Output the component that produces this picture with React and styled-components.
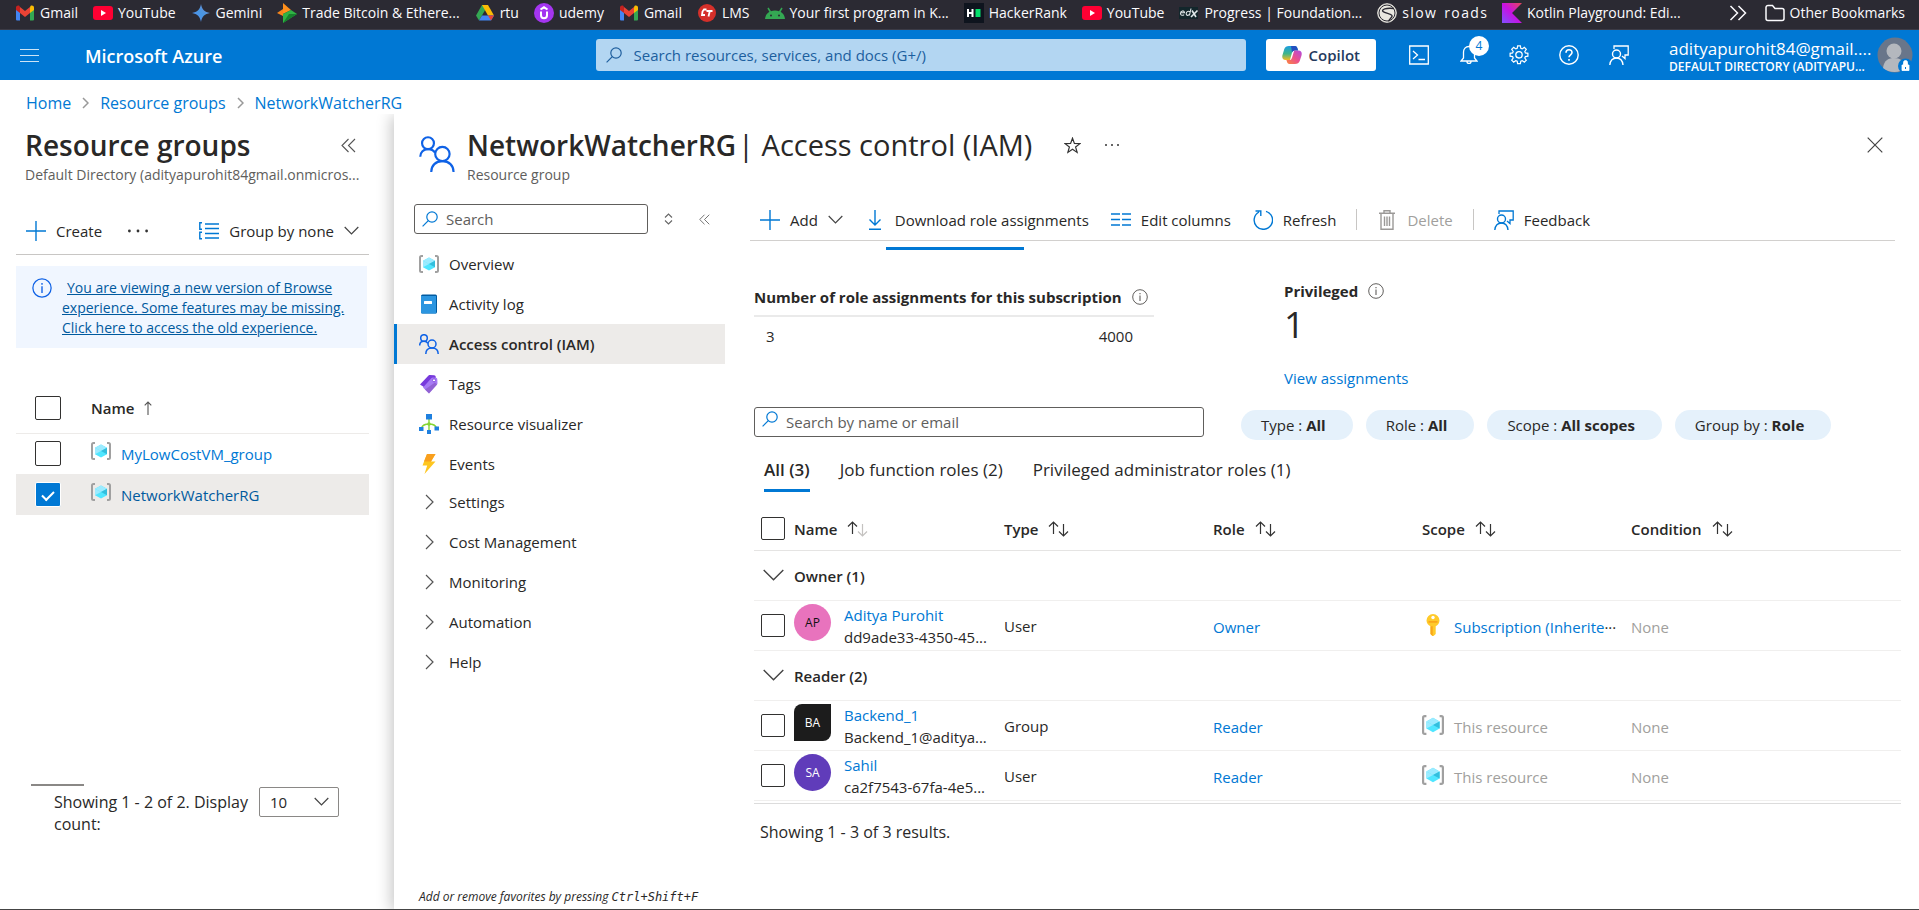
import React from "react";
import styled, { createGlobalStyle, css } from "styled-components";

const c = {
  blue: "#0078d4",
  darkBlue: "#005a9e",
  text: "#292827",
  muted: "#605e5c",
  faint: "#a19f9d",
  selected: "#edebe9",
};

const Global = createGlobalStyle`
  * { box-sizing: border-box; }
  body {
    margin: 0;
    background: #fff;
    color: ${c.text};
    font-family: "Open Sans", "Noto Sans", sans-serif;
    font-size: 15px;
    line-height: 20px;
  }
  button, input, select { font: inherit; color: inherit; }
  button { background: none; border: 0; padding: 0; cursor: pointer; }
  a { color: ${c.blue}; text-decoration: none; }
  svg { display: block; flex: none; }
  h1, h2, p, ul { margin: 0; padding: 0; font-weight: normal; }
  ul { list-style: none; }
`;

/* ---------- icons ---------- */

const Svg = ({ w = 20, h = 20, box, children, ...rest }) => (
  <svg width={w} height={h} viewBox={box || `0 0 ${w} ${h}`} fill="none" aria-hidden="true" {...rest}>
    {children}
  </svg>
);

const GmailIcon = () => (
  <Svg w={20} h={18} box="0 0 20 18">
    <path d="M1 3v12.5a1 1 0 0 0 1 1h3V7z" fill="#4285f4" />
    <path d="M19 3v12.5a1 1 0 0 1-1 1h-3V7z" fill="#34a853" />
    <path d="M15 3.2V9l4-3V3.6c0-2-2.200-2.600-3.500-1.600z" fill="#fbbc04" />
    <path d="M5 3.200V9L1 6V3.600c0-2 2.200-2.600 3.500-1.600z" fill="#c5221f" />
    <path d="M5 3l5 3.900L15 3v6l-5 3.900L5 9z" fill="#ea4335" />
  </Svg>
);
const YouTubeIcon = () => (
  <Svg>
    <rect y="3" width="20" height="14" rx="3" fill="#f03" />
    <path d="M8 7l5 3-5 3z" fill="#fff" />
  </Svg>
);
const GeminiIcon = () => (
  <Svg>
    <defs>
      <linearGradient id="gem" x1="0" y1="1" x2="1" y2="0">
        <stop offset="0" stopColor="#5b8def" />
        <stop offset=".5" stopColor="#4796e3" />
        <stop offset="1" stopColor="#7b8ccc" />
      </linearGradient>
    </defs>
    <path d="M10 1c.8 5.200 3.800 8.200 9 9-5.200.8-8.200 3.800-9 9-.8-5.200-3.800-8.200-9-9 5.200-.8 8.200-3.800 9-9z" fill="url(#gem)" />
  </Svg>
);
const TradeIcon = () => (
  <Svg>
    <path d="M6 0l8 7-8 4z" fill="#ff8f1c" />
    <path d="M0 10l6-4v7z" fill="#f7841b" />
    <path d="M6 11l8-4 6 4-14 9z" fill="#2fb344" />
    <path d="M6 20l14-9-8 0z" fill="#16802c" />
  </Svg>
);
const DriveIcon = () => (
  <Svg>
    <path d="M7 2h6l-3 5.300L4 17.500 1 12.500z" fill="#34a853" />
    <path d="M7 2h6l6 10.500h-6z" fill="#fbbc04" />
    <path d="M4 17.500l3-5h12l-3 5z" fill="#4285f4" />
    <path d="M13 12.500h6l-3 5z" fill="#ea4335" />
  </Svg>
);
const UdemyIcon = () => (
  <Svg>
    <circle cx="10" cy="10" r="10" fill="#a435f0" />
    <path d="M6.500 6.500L10 4.300l3.500 2.200M7 8.500v3.700a3 3 0 0 0 6 0V8.500" stroke="#fff" strokeWidth="2" />
  </Svg>
);
const LmsIcon = () => (
  <Svg>
    <circle cx="10" cy="10" r="9" fill="#d5302a" />
    <path d="M9.500 6.500H7L5.500 8.500 5 12h3M9.500 8h6M12.800 8l-1.300 5.500" stroke="#fff" strokeWidth="1.800" />
  </Svg>
);
const AndroidIcon = () => (
  <Svg>
    <path d="M0 16C.5 11 4 7.500 10 7.500S19.500 11 20 16z" fill="#34a853" />
    <path d="M5.500 9L3 5M14.500 9L17 5" stroke="#34a853" strokeWidth="1.500" />
    <circle cx="6" cy="12.500" r="1" fill="#2b2a33" />
    <circle cx="14" cy="12.500" r="1" fill="#2b2a33" />
  </Svg>
);
const HackerIcon = () => (
  <Svg>
    <rect width="20" height="20" fill="#0e141e" />
    <path d="M4 6v8M8.500 6v8M4 10h4.500" stroke="#fff" strokeWidth="2" />
    <rect x="11.500" y="6" width="5" height="8" fill="#05e06c" />
  </Svg>
);
const EdxIcon = () => (
  <Svg>
    <rect y="4" width="19" height="12" fill="#12262b" />
    <path d="M1.500 9.800h4c0-2.600-3.800-2.600-4 .6 0 2.200 2.400 2.300 3.600 1.200M12 5.500l-1.600 7M11.200 8.800c-2.400-1.300-4 .2-4 2 0 1.900 2.200 2.100 3.500.4" stroke="#dfe7e8" strokeWidth="1.100" />
    <path d="M13 7.500l4 6.500M18.500 7.500L12 14" stroke="#dfe7e8" strokeWidth="1.600" />
  </Svg>
);
const RoadIcon = () => (
  <Svg>
    <circle cx="10" cy="10" r="9.300" fill="#e9e7e0" stroke="#e9e7e0" />
    <circle cx="10" cy="10" r="8" stroke="#2b2a33" />
    <path d="M17 5.500C9 4.500 4 6.500 6 8.500s8 2 9 4-3.500 3.500-3 6" stroke="#2b2a33" strokeWidth="1.400" />
  </Svg>
);
const KotlinIcon = () => (
  <Svg>
    <defs>
      <linearGradient id="kot" x1="0" y1="1" x2="1" y2="0">
        <stop offset="0" stopColor="#7f52ff" />
        <stop offset=".5" stopColor="#c711e1" />
        <stop offset="1" stopColor="#e44857" />
      </linearGradient>
    </defs>
    <path d="M0 0h20L10 10l10 10H0z" fill="url(#kot)" />
  </Svg>
);
const FolderIcon = () => (
  <Svg>
    <path d="M1 4.500a2 2 0 0 1 2-2h4.500l2.500 3h7a2 2 0 0 1 2 2v8a2 2 0 0 1-2 2H3a2 2 0 0 1-2-2z" stroke="#fbfbfe" strokeWidth="1.500" />
  </Svg>
);
const MoreIcon = () => (
  <Svg w={18} h={16}>
    <path d="M1.500 1l7 7-7 7M9.500 1l7 7-7 7" stroke="#fbfbfe" strokeWidth="1.500" />
  </Svg>
);

const SearchIcon = ({ color = c.blue }) => (
  <Svg w={16} h={16}>
    <circle cx="10" cy="6" r="5.200" stroke={color} strokeWidth="1.200" />
    <path d="M6.300 9.700L.6 15.400" stroke={color} strokeWidth="1.200" />
  </Svg>
);
const MenuIcon = () => (
  <Svg w={19} h={14}>
    <path d="M0 1.500h19M0 7.500h19M0 13.500h19" stroke="#cde4f6" strokeWidth="1.200" />
  </Svg>
);
const CopilotIcon = () => (
  <Svg>
    <defs>
      <linearGradient id="cpA" x1="0" y1="0" x2="0" y2="1">
        <stop offset="0" stopColor="#1b9de2" />
        <stop offset=".55" stopColor="#3fb58a" />
        <stop offset="1" stopColor="#f5b921" />
      </linearGradient>
      <linearGradient id="cpB" x1="1" y1="0" x2="0" y2="1">
        <stop offset="0" stopColor="#b04ae0" />
        <stop offset=".5" stopColor="#ec4f8d" />
        <stop offset="1" stopColor="#fb8a3c" />
      </linearGradient>
    </defs>
    <path d="M7 1h6c1.500 0 2 1 2.500 2.500l.6 2H13c-1.800 0-2.600 1-3.100 2.600L8 15H3.500C.6 15-.2 12.500.5 10L2.300 4C3 2 4.500 1 7 1z" fill="url(#cpA)" />
    <path d="M9 1h4c1.500 0 2 1 2.500 2.500l.6 2H13c-1.500 0-2.500.8-3 2z" fill="#2350c0" />
    <path d="M13 19H7.500c-1.600 0-2.200-1-2.600-2.400L4.400 15H7c1.800 0 2.600-1 3.100-2.600L12.200 5.500h4.300c2.900 0 3.700 2.500 3 5L17.700 16c-.7 2-2.200 3-4.700 3z" fill="url(#cpB)" />
  </Svg>
);
const TerminalIcon = () => (
  <Svg>
    <path d="M.7 1h18.600v18H.7z" stroke="#fff" strokeWidth="1.300" />
    <path d="M4 6l4.500 4L4 14M9.500 14.500H16" stroke="#fff" strokeWidth="1.300" />
  </Svg>
);
const BellIcon = () => (
  <Svg w={18} h={20}>
    <path d="M9 1.500c-3.500 0-5.500 2.500-5.500 5.500v6L1 16h16l-2.500-3V7c0-3-2-5.500-5.500-5.500zM7 16.500c0 2.600 4 2.600 4 0" stroke="#fff" strokeWidth="1.300" />
  </Svg>
);
const GearIcon = () => (
  <Svg box="0 0 20 20">
    <path d="M8.600.8h2.800l.4 2.500 1.400.6 2.100-1.500 2 2-1.500 2.100.6 1.400 2.500.4v2.900l-2.500.4-.6 1.400 1.500 2.100-2 2-2.100-1.500-1.400.6-.4 2.500H8.600l-.4-2.500-1.400-.6-2.100 1.500-2-2 1.500-2.100-.6-1.400-2.500-.4V8.300l2.500-.4.6-1.400-1.500-2.100 2-2 2.100 1.500 1.400-.6z" stroke="#fff" strokeWidth="1.200" />
    <circle cx="10" cy="9.800" r="3.200" stroke="#fff" strokeWidth="1.300" />
  </Svg>
);
const HelpIcon = () => (
  <Svg>
    <circle cx="10" cy="10" r="9.200" stroke="#fff" strokeWidth="1.400" />
    <path d="M7 7.800c0-4 6-3.900 6-.3 0 2.300-3 2.300-3 4.800M10 14v1.800" stroke="#fff" strokeWidth="1.600" />
  </Svg>
);
const FeedbackIcon = ({ color = c.blue }) => (
  <Svg>
    <path d="M5 4V1h14.200v9H16v3.500L13 11" stroke={color} strokeWidth="1.300" />
    <circle cx="7.500" cy="9" r="4" stroke={color} strokeWidth="1.400" />
    <path d="M.8 20c.5-4.500 3-7 6.700-7s6 2.500 6.500 7" stroke={color} strokeWidth="1.400" />
  </Svg>
);
const AvatarIcon = () => (
  <Svg w={36} h={36}>
    <circle cx="18" cy="18" r="17.500" fill="#69768a" />
    <path d="M6 31c1-8 6-10 11-10 6 0 10 3 12 9.500A17.500 17.500 0 0 1 6 31z" fill="#b4b8be" />
    <circle cx="17" cy="14" r="7.500" fill="#b4b8be" />
    <circle cx="28.500" cy="29" r="7.500" fill={c.blue} />
    <path d="M25 28h7v5.500h-7zM26.500 28v-2.500a2 2 0 0 1 4 0V28" fill="#fff" stroke="#fff" strokeWidth=".8" />
    <path d="M28.500 30v2" stroke={c.blue} />
  </Svg>
);

const Caret = ({ w = 15, color = "#444", sw = 1.200 }) => (
  <Svg w={w} h={Math.round(w / 2) + 2}>
    <path d={`M.7 1L${w / 2} ${w / 2 + 0.300}L${w - 0.700} 1`} stroke={color} strokeWidth={sw} />
  </Svg>
);
const RightCaret = ({ w = 9, h = 16, color = "#555", sw = 1.200 }) => (
  <Svg w={w} h={h}>
    <path d={`M1 1L${w - 1} ${h / 2}L1 ${h - 1}`} stroke={color} strokeWidth={sw} />
  </Svg>
);
const CollapseIcon = ({ s = 15 }) => (
  <Svg w={s} h={s} box="0 0 15 15">
    <path d="M7.500 1L1 7.500 7.500 14M14 1L7.500 7.500 14 14" stroke="#555" strokeWidth="1.100" />
  </Svg>
);
const UpDownIcon = () => (
  <Svg w={9} h={12}>
    <path d="M1 4.500L4.500 1 8 4.500M1 7.500L4.500 11 8 7.500" stroke="#666" strokeWidth="1.100" />
  </Svg>
);
const PlusIcon = () => (
  <Svg>
    <path d="M10 0v20M0 10h20" stroke={c.blue} strokeWidth="1.400" />
  </Svg>
);
const Dots = ({ w = 20, r = 1.400 }) => (
  <Svg w={w} h={4}>
    <g fill="#333">
      <circle cx={r} cy="2" r={r} />
      <circle cx={w / 2} cy="2" r={r} />
      <circle cx={w - r} cy="2" r={r} />
    </g>
  </Svg>
);
const GroupIcon = () => (
  <Svg w={20} h={18}>
    <path d="M6 2h14M6 6.500h14M6 11.500h14M6 16h14" stroke={c.blue} strokeWidth="1.600" />
    <path d="M3 .8H.8v6.400H3M3 10.300H.8v6.400H3" stroke={c.blue} strokeWidth="1.400" />
  </Svg>
);
const InfoIcon = ({ s = 16, color = "#605e5c" }) => (
  <Svg w={s} h={s} box="0 0 16 16">
    <circle cx="8" cy="8" r="7.300" stroke={color} />
    <path d="M8 6.500V12M8 4v1.300" stroke={color} strokeWidth="1.100" />
  </Svg>
);
const CubeIcon = ({ w = 20, h = 18 }) => (
  <Svg w={w} h={h} box="0 0 20 18">
    <path d="M4 1H2.500A1.500 1.500 0 0 0 1 2.500v13A1.500 1.500 0 0 0 2.500 17H4M16 1h1.500A1.500 1.500 0 0 1 19 2.500v13a1.500 1.500 0 0 1-1.500 1.500H16" stroke="#a0a0a0" strokeWidth="2" />
    <path d="M10 2.500l6 3.300v6.400l-6 3.300-6-3.300V5.800z" fill="#50e6ff" />
    <path d="M10 2.500l6 3.300L10 9 4 5.800z" fill="#9cebff" />
    <path d="M10 9l6-3.200v6.400z" fill="#32bedd" />
    <path d="M4 5.800L10 9l-6 3.200z" fill="#9cebff" />
  </Svg>
);
const LogIcon = () => (
  <Svg>
    <rect x="2" y=".5" width="16" height="19" rx="1.500" fill="#005ba1" />
    <path d="M3.500 2H17v17.500H3.500A1.500 1.500 0 0 1 2 18V2z" fill="#2b95e0" />
    <rect x="5" y="7" width="8" height="3" rx=".5" fill="#fff" />
  </Svg>
);
const PeopleIcon = ({ s = 20 }) => (
  <Svg w={s} h={s} box="0 0 20 20">
    <g stroke="#0f62e6" strokeWidth={s > 20 ? 1.200 : 1.500}>
      <circle cx="5" cy="4" r="3.300" />
      <path d="M.7 11.500C.7 9 2.500 7.300 5 7.300c1.800 0 3.100.7 3.900 2" />
      <circle cx="13" cy="10" r="4" />
      <path d="M6.800 20c0-3.700 2.500-6 6.200-6s6.200 2.300 6.200 6" />
    </g>
  </Svg>
);
const TagIcon = () => (
  <Svg>
    <path d="M1 10.500L9.500 1.600c.5-.5 1-.6 1.600-.6l4 .3c1 .1 1.600.7 1.600 1.500l.2 4.500c0 .6-.2 1.100-.6 1.500L9.500 16z" fill="#773adc" />
    <path d="M4 13.500L12.500 4c.5-.5 1-.7 1.600-.6l2.900.4c.8.1 1.300.7 1.300 1.400l.2 4c0 .6-.2 1-.6 1.500L10 19.500z" fill="#a67af4" />
    <path d="M6 15.500l10-7 2 2-8 9z" fill="#8352bd" opacity=".6" />
    <circle cx="15" cy="6.300" r="1.500" fill="#fff" stroke="#773adc" strokeWidth=".8" />
  </Svg>
);
const VisualizerIcon = () => (
  <Svg>
    <path d="M10 5v12M2.500 14c1-3 4-4 7.500-4s6.500 1 7.500 4" stroke="#86d633" strokeWidth="1.400" />
    <circle cx="10" cy="10" r="1.800" fill="#86d633" />
    <g fill="#1f80df">
      <rect x="7" y="0" width="6" height="5.500" />
      <rect x="0" y="13" width="4.500" height="4" />
      <rect x="15.500" y="12.500" width="4.500" height="4" />
      <rect x="8" y="16" width="4" height="4" />
    </g>
  </Svg>
);
const BoltIcon = () => (
  <Svg>
    <path d="M8 0h8.500L12 7.500h4.500L5.500 20l2.700-8.500H3.500z" fill="#fec61f" />
    <path d="M8 0h8.500L12 7.500H5z" fill="#f99f1e" />
  </Svg>
);
const StarIcon = () => (
  <Svg w={17} h={17} box="0 0 17 17">
    <path d="M8.500 1.200l1.900 5.200 5.600.2-4.400 3.400 1.500 5.400-4.600-3.100-4.600 3.100 1.500-5.400L1 6.600l5.600-.2z" stroke="#333" strokeWidth="1.200" />
  </Svg>
);
const CloseIcon = () => (
  <Svg w={16} h={16}>
    <path d="M.7.7l14.600 14.600M15.300.7L.7 15.300" stroke="#444" strokeWidth="1.200" />
  </Svg>
);
const DownloadIcon = () => (
  <Svg>
    <path d="M10 0v15M4.500 9.500L10 15l5.500-5.500M4 19.200h12" stroke={c.blue} strokeWidth="1.400" />
  </Svg>
);
const ColumnsIcon = () => (
  <Svg>
    <path d="M0 4h9M11 4h9M0 9.500h9M11 9.500h9M0 15h9M11 15h9" stroke={c.blue} strokeWidth="1.500" />
  </Svg>
);
const RefreshIcon = () => (
  <Svg>
    <path d="M13 1.300A9.200 9.200 0 1 1 6 2M2.500 1h5.300v5" stroke={c.blue} strokeWidth="1.400" />
  </Svg>
);
const TrashIcon = () => (
  <Svg>
    <path d="M2 3.200h16M7 3V.8h6V3M4 3.500v15.700h12V3.500M7.500 6.500V16M10 6.500V16M12.500 6.500V16" stroke="#9b9997" strokeWidth="1.400" />
  </Svg>
);
const KeyIcon = () => (
  <Svg w={22} h={22}>
    <path d="M11 0a6.500 6.500 0 0 1 6.500 6.500c0 2.600-1.600 4.700-3.800 5.700V20L11.500 22h-1l-2-2v-7.800c-2.300-1-4-3.200-4-5.700A6.500 6.500 0 0 1 11 0z" fill="#ffca2a" />
    <path d="M8.500 12.200h2.200V22h-.2l-2-2zM6.500 7h9v1.800h-9z" fill="#f9a619" />
    <circle cx="11" cy="3.500" r="1.700" fill="#fff" />
  </Svg>
);
const SortArrows = ({ dim }) => (
  <Svg w={21} h={16}>
    <path d="M5.500 13V1M1 5.500L5.500 1 10 5.500" stroke="#333" strokeWidth="1.200" />
    <path d="M15.500 3v12M11 10.500l4.500 4.500 4.500-4.500" stroke={dim ? "#c4c2c0" : "#333"} strokeWidth="1.200" />
  </Svg>
);
const UpArrow = () => (
  <Svg w={8} h={14}>
    <path d="M4 14V1M.7 4.300L4 1l3.300 3.300" stroke="#555" strokeWidth="1.100" />
  </Svg>
);

/* ---------- browser bookmarks ---------- */

const Bookmarks = styled.nav`
  display: flex;
  align-items: center;
  gap: 15px;
  height: 30px;
  padding: 0 14px 4px 15px;
  background: #2b2a33;
  border-bottom: 1px solid #3c3b46;
  font-size: 14px;
  overflow: hidden;
`;
const Bookmark = styled.a`
  display: flex;
  align-items: center;
  gap: 5px;
  color: #fbfbfe;
  white-space: nowrap;
`;
const Overflow = styled.div`
  display: flex;
  align-items: center;
  gap: 18px;
  margin-left: auto;
`;

const bookmarks = [
  [GmailIcon, "Gmail"],
  [YouTubeIcon, "YouTube"],
  [GeminiIcon, "Gemini"],
  [TradeIcon, "Trade Bitcoin & Ethere..."],
  [DriveIcon, "rtu"],
  [UdemyIcon, "udemy"],
  [GmailIcon, "Gmail"],
  [LmsIcon, "LMS"],
  [AndroidIcon, "Your first program in K..."],
  [HackerIcon, "HackerRank"],
  [YouTubeIcon, "YouTube"],
  [EdxIcon, "Progress | Foundation..."],
  [RoadIcon, "s\u200al\u200ao\u200aw\u2009 \u2009r\u200ao\u200aa\u200ad\u200as"],
  [KotlinIcon, "Kotlin Playground: Edi..."],
];

/* ---------- azure header ---------- */

const TopBar = styled.header`
  display: flex;
  align-items: center;
  height: 50px;
  padding: 0 6px 0 20px;
  background: ${c.blue};
  color: #fff;
`;
const Brand = styled.a`
  margin-left: 46px;
  padding-top: 2px;
  color: #fff;
  font-size: 18px;
  font-weight: 600;
`;
const GlobalSearch = styled.label`
  display: flex;
  align-items: center;
  gap: 12px;
  flex: 0 1 650px;
  height: 32px;
  margin: 0 20px 0 auto;
  padding: 0 10px;
  border-radius: 3px;
  background: #b3d6f2;
`;
const BareInput = styled.input`
  flex: 1;
  min-width: 0;
  padding: 0;
  border: 0;
  outline: 0;
  background: none;
  &::placeholder { color: ${(p) => p.$hint || c.muted}; opacity: 1; }
`;
const Copilot = styled.button`
  display: flex;
  align-items: center;
  gap: 7px;
  height: 32px;
  margin-right: 33px;
  padding: 0 16px;
  border-radius: 3px;
  background: #fff;
  color: #243a5e;
  font-weight: 600;
`;
const TopTools = styled.div`
  display: flex;
  align-items: center;
  gap: 30px;
`;
const TopTool = styled.button`
  position: relative;
  display: grid;
  place-items: center;
  width: 20px;
  height: 20px;
`;
const Badge = styled.span`
  position: absolute;
  left: 10px;
  top: -9px;
  width: 20px;
  height: 20px;
  border-radius: 10px;
  background: #fff;
  color: ${c.blue};
  font-size: 12px;
  line-height: 19px;
  text-align: center;
`;
const Account = styled.button`
  display: flex;
  align-items: center;
  gap: 6px;
  margin-left: 40px;
  color: #fff;
  text-align: left;
  white-space: nowrap;
`;
const AccountText = styled.span`
  display: grid;
  width: 202px;
  padding-top: 4px;
  font-size: 17px;
  strong { font-size: 12px; line-height: 16px; font-weight: 600; }
`;

/* ---------- breadcrumb ---------- */

const Crumbs = styled.nav`
  display: flex;
  align-items: center;
  gap: 11px;
  height: 34px;
  padding: 11px 26px 0;
  font-size: 16px;
`;

const Workspace = styled.div`
  display: flex;
  flex: 1;
  border-bottom: 1px solid #444;
`;

/* ---------- resource groups blade ---------- */

const Side = styled.aside`
  display: flex;
  flex-direction: column;
  flex: none;
  width: 394px;
  padding: 13px 25px 0 16px;
`;
const SideHead = styled.div`
  display: flex;
  align-items: center;
  justify-content: space-between;
  padding: 0 13px 0 9px;
`;
const Title = styled.h1`
  font-size: 28px;
  line-height: 36px;
  font-weight: 600;
  white-space: nowrap;
`;
const PageName = styled.span`
  margin-left: 2px;
  font-size: 29px;
  line-height: 36px;
  white-space: nowrap;
`;
const Subtitle = styled.p`
  padding-left: ${(p) => p.$inset || 0}px;
  margin-top: 2px;
  color: ${c.muted};
  font-size: 14px;
  white-space: nowrap;
`;
const SideTools = styled.div`
  display: flex;
  align-items: center;
  justify-content: space-between;
  margin-top: 23px;
  height: 47px;
  padding: 0 10px;
  border-bottom: 1px solid #c8c6c4;
`;
const Cluster = styled.div`
  display: flex;
  align-items: center;
  gap: ${(p) => p.$gap}px;
`;
const HeadTools = styled.div`
  display: flex;
  align-items: center;
  gap: 24px;
  height: 36px;
  padding-left: 32px;
`;
const Tool = styled.button`
  display: flex;
  align-items: center;
  gap: 10px;
  color: ${(p) => (p.disabled ? c.faint : c.text)};
  white-space: nowrap;
`;
const Banner = styled.div`
  display: flex;
  align-items: flex-start;
  gap: 10px;
  margin: 11px 2px 0 0;
  padding: 12px 8px 10px 16px;
  background: #f0f6ff;
  font-size: 14px;
  white-space: nowrap;
  a { color: ${c.darkBlue}; text-decoration: underline; }
`;
const FirstLine = styled.span`
  margin-left: 5px;
`;
const Check = styled.input`
  appearance: none;
  display: block;
  width: ${(p) => p.$w || 24}px;
  height: ${(p) => p.$h || 24}px;
  margin: 0;
  border: 1px solid #323130;
  border-radius: 2px;
  background: #fff;
  &:checked { border-color: #fff; background: ${c.blue}; }
  &:checked::after {
    content: "";
    display: block;
    width: 10px;
    height: 5px;
    margin: 8px auto 0;
    border: solid #fff;
    border-width: 0 0 2px 2px;
    rotate: -45deg;
  }
`;
const GroupTable = styled.table`
  width: 100%;
  margin-top: 35px;
  border-collapse: collapse;
  th { text-align: left; font-weight: 600; }
  td, th { height: 41px; padding: 0; }
  th { height: 50px; border-bottom: 1px solid #edebe9; }
  td:first-child, th:first-child { width: 75px; padding-left: 19px; }
  td svg { margin-bottom: 6px; }
`;
const GroupRow = styled.tr`
  ${(p) => p.$on && css`
    background: ${c.selected};
    a { color: ${c.darkBlue}; }
  `}
`;
const IconLink = styled.span`
  display: flex;
  align-items: center;
  gap: 10px;
  white-space: nowrap;
`;
const SideFoot = styled.footer`
  margin-top: auto;
  padding: 0 0 74px 15px;
`;
const ScrollThumb = styled.div`
  width: 53px;
  height: 2px;
  background: #8a8886;
`;
const Pager = styled.div`
  display: flex;
  align-items: flex-start;
  gap: 14px;
  padding: 1px 0 0 23px;
  line-height: 22px;
  label { width: 191px; padding-top: 4px; font-size: 16px; white-space: nowrap; }
`;
const SelectBox = styled.span`
  display: grid;
  grid-template-columns: 1fr 24px;
  align-items: center;
  width: 80px;
  height: 30px;
  border: 1px solid #8a8886;
  border-radius: 2px;
  > * { grid-row: 1; }
  select {
    grid-column: 1 / 3;
    width: 100%;
    height: 28px;
    padding: 0 10px;
    border: 0;
    background: none;
    appearance: none;
  }
  svg { grid-column: 2; pointer-events: none; }
`;

/* ---------- main blade ---------- */

const Blade = styled.section`
  display: flex;
  flex-direction: column;
  flex: 1;
  min-width: 0;
  padding-top: 13px;
  background: #fff;
  box-shadow: -3px 2px 14px rgba(0, 0, 0, 0.22);
  clip-path: inset(0 0 0 -20px);
`;
const BladeHead = styled.header`
  display: flex;
  align-items: flex-start;
  padding: 0 36px 0 25px;
`;
const HeadIcon = styled.div`
  width: 48px;
  padding-top: 9px;
`;
const HeadRow = styled.div`
  display: flex;
  align-items: center;
  height: 36px;
`;
const Spacer = styled.div`
  flex: 1;
`;
const BladeBody = styled.div`
  display: flex;
  flex: 1;
`;
const Menu = styled.nav`
  display: flex;
  flex-direction: column;
  flex: none;
  width: 331px;
  padding-top: 19px;
`;
const MenuTop = styled.div`
  display: flex;
  align-items: center;
  padding: 0 15px 10px 20px;
`;
const SearchBox = styled.label`
  display: flex;
  align-items: center;
  gap: 8px;
  width: ${(p) => p.$w}px;
  height: 30px;
  padding: 0 7px;
  border: 1px solid #605e5c;
  border-radius: 3px;
  ${(p) => p.$raised && css`
    svg { align-self: flex-start; margin-top: 3px; }
  `}
`;
const MenuTools = styled.div`
  display: flex;
  flex: 1;
  align-items: center;
  justify-content: space-between;
  padding-left: 16px;
`;
const MenuItem = styled.a`
  display: flex;
  align-items: center;
  gap: 10px;
  height: 40px;
  padding-left: 22px;
  padding-bottom: ${(p) => (p.$group ? 4 : 0)}px;
  border-left: 3px solid ${(p) => (p.$on ? c.blue : "transparent")};
  background: ${(p) => (p.$on ? c.selected : "none")};
  color: ${c.text};
  font-weight: ${(p) => (p.$on ? 600 : 400)};
`;
const MenuIconBox = styled.span`
  display: grid;
  place-items: center;
  width: 20px;
`;
const MenuNote = styled.p`
  margin-top: auto;
  padding: 0 25px 2px;
  font-size: 12px;
  font-style: italic;
  white-space: nowrap;
  kbd { font-family: "DejaVu Sans Mono", monospace; font-size: 12px; }
`;
const Content = styled.main`
  flex: 1;
  min-width: 0;
  padding: 0 18px 0 25px;
`;
const Toolbar = styled.div`
  display: flex;
  align-items: center;
  gap: 22px;
  height: 42px;
  margin: 14px 6px 0 0;
  padding: 0 10px;
  border-bottom: 1px solid #d2d0ce;
`;
const Rule = styled.i`
  width: 1px;
  height: 21px;
  margin: 0 -2px;
  background: #c8c6c4;
`;
const Progress = styled.div`
  width: 138px;
  height: 3px;
  margin: 6px 0 0 136px;
  background: ${c.blue};
`;
const Inner = styled.div`
  padding-left: 4px;
`;
const Stats = styled.div`
  display: flex;
  align-items: flex-start;
  gap: 130px;
  padding-top: 31px;
  strong { font-weight: 700; }
`;
const Quota = styled.div`
  width: 400px;
  padding-top: 6px;
`;
const StatHead = styled.h2`
  display: flex;
  align-items: center;
  gap: 10px;
  font-size: 15px;
  white-space: nowrap;
`;
const QuotaRow = styled.div`
  display: flex;
  justify-content: space-between;
  margin-top: 8px;
  padding: 9px 21px 0 12px;
  border-top: 2px solid #eaeaea;
`;
const BigNumber = styled.p`
  padding: 8px 0 18px;
  font-size: 36px;
  line-height: 32px;
  + a { display: block; margin-top: 9px; }
`;
const Filters = styled.div`
  display: flex;
  align-items: center;
  gap: 13px;
  margin-top: 16px;
  > label { margin-right: 24px; }
`;
const Pill = styled.button`
  height: 30px;
  margin-top: 6px;
  padding: 0 27px 0 20px;
  border-radius: 15px;
  background: #e5f1fb;
  white-space: nowrap;
  b { font-weight: 700; }
`;
const Tabs = styled.div`
  display: flex;
  gap: 30px;
  padding: 15px 0 0 10px;
`;
const Tab = styled.button`
  height: 37px;
  padding-bottom: 5px;
  border-bottom: 3px solid ${(p) => (p.$on ? c.blue : "transparent")};
  font-size: 17px;
  font-weight: ${(p) => (p.$on ? 600 : 400)};
`;
const Roles = styled.table`
  width: 100%;
  margin-top: 15px;
  border-collapse: separate;
  border-spacing: 0;
  table-layout: fixed;
  border-bottom: 1px solid #dcdcdc;
  padding-bottom: 2px;
  td, th { padding: 0; border-bottom: 1px solid #f0efee; text-align: left; white-space: nowrap; }
  th { height: 44px; font-weight: 600; border-color: #e5e4e3; }
  td { height: 50px; }
  td:nth-child(n + 4) { padding-top: 2px; }
  td:first-child, th:first-child { padding-left: 7px; }
  td svg { margin-bottom: 4px; }
`;
const GroupCell = styled.th.attrs({ colSpan: 6, scope: "colgroup" })`
  &&& { height: 50px; padding-left: 9px; border-color: #f0efee; }
`;
const Faint = styled.span`
  color: ${c.faint};
`;
const Person = styled.div`
  display: flex;
  gap: 13px;
  padding-top: 3px;
  height: 49px;
  line-height: 22px;
`;
const PersonText = styled.div`
  display: grid;
  align-content: start;
`;
const Face = styled.span`
  width: 37px;
  height: 37px;
  flex: none;
  border-radius: ${(p) => (p.$square ? "8px 0" : "50%")};
  background: ${(p) => p.$bg};
  color: ${(p) => p.$fg || "#fff"};
  font-size: 12px;
  line-height: 38px;
  text-align: center;
`;
const Results = styled.p`
  padding: 18px 6px;
  font-size: 16px;
`;

const menu = [
  [CubeIcon, "Overview"],
  [LogIcon, "Activity log"],
  [PeopleIcon, "Access control (IAM)", true],
  [TagIcon, "Tags"],
  [VisualizerIcon, "Resource visualizer"],
  [BoltIcon, "Events"],
  [RightCaret, "Settings"],
  [RightCaret, "Cost Management"],
  [RightCaret, "Monitoring"],
  [RightCaret, "Automation"],
  [RightCaret, "Help"],
];

const sections = [
  {
    name: "Owner (1)",
    rows: [{ name: "Aditya Purohit", id: "dd9ade33-4350-45...", initials: "AP", bg: "#e873bd", fg: "#111", type: "User", role: "Owner", inherited: true }],
  },
  {
    name: "Reader (2)",
    rows: [
      { name: "Backend_1", id: "Backend_1@aditya...", initials: "BA", bg: "#1c1c1c", square: true, type: "Group", role: "Reader" },
      { name: "Sahil", id: "ca2f7543-67fa-4e5...", initials: "SA", bg: "#603cba", type: "User", role: "Reader" },
    ],
  },
];

const Page = styled.div`
  display: flex;
  flex-direction: column;
  min-height: 100vh;
`;

const RoleRow = ({ row }) => (
  <tr>
    <td><Check type="checkbox" aria-label={`Select ${row.name}`} $h={23} /></td>
    <td>
      <Person>
        <Face $bg={row.bg} $fg={row.fg} $square={row.square}>{row.initials}</Face>
        <PersonText>
          <a href="#">{row.name}</a>
          <span>{row.id}</span>
        </PersonText>
      </Person>
    </td>
    <td>{row.type}</td>
    <td><a href="#">{row.role}</a></td>
    <td>
      {row.inherited ? (
        <IconLink><KeyIcon /><span><a href="#">Subscription (Inherite</a>···</span></IconLink>
      ) : (
        <IconLink><CubeIcon w={22} h={20} /><Faint>This resource</Faint></IconLink>
      )}
    </td>
    <td><Faint>None</Faint></td>
  </tr>
);

export default function App() {
  return (
    <Page>
      <Global />
      <Bookmarks aria-label="Bookmarks">
        {bookmarks.map(([Icon, label], i) => (
          <Bookmark href="#" key={i}><Icon />{label}</Bookmark>
        ))}
        <Overflow>
          <MoreIcon />
          <Bookmark href="#"><FolderIcon />Other Bookmarks</Bookmark>
        </Overflow>
      </Bookmarks>

      <TopBar>
        <button aria-label="Menu"><MenuIcon /></button>
        <Brand href="#">Microsoft Azure</Brand>
        <GlobalSearch>
          <SearchIcon color="#1f5f9e" />
          <BareInput $hint="#1c5f9f" placeholder="Search resources, services, and docs (G+/)" aria-label="Search resources" />
        </GlobalSearch>
        <Copilot><CopilotIcon />Copilot</Copilot>
        <TopTools>
          <TopTool aria-label="Cloud Shell"><TerminalIcon /></TopTool>
          <TopTool aria-label="Notifications"><BellIcon /><Badge>4</Badge></TopTool>
          <TopTool aria-label="Settings"><GearIcon /></TopTool>
          <TopTool aria-label="Help"><HelpIcon /></TopTool>
          <TopTool aria-label="Feedback"><FeedbackIcon color="#fff" /></TopTool>
        </TopTools>
        <Account>
          <AccountText>
            <span>adityapurohit84@gmail....</span>
            <strong>DEFAULT DIRECTORY (ADITYAPU...</strong>
          </AccountText>
          <AvatarIcon />
        </Account>
      </TopBar>

      <Crumbs aria-label="Breadcrumb">
        <a href="#">Home</a>
        <RightCaret w={7} h={12} color="#999" sw={1.5} />
        <a href="#">Resource groups</a>
        <RightCaret w={7} h={12} color="#999" sw={1.5} />
        <a href="#">NetworkWatcherRG</a>
      </Crumbs>

      <Workspace>
        <Side>
          <SideHead>
            <Title>Resource groups</Title>
            <button aria-label="Collapse"><CollapseIcon /></button>
          </SideHead>
          <Subtitle $inset={9}>Default Directory (adityapurohit84gmail.onmicros...</Subtitle>
          <SideTools>
            <Cluster $gap={26}>
              <Tool><PlusIcon />Create</Tool>
              <button aria-label="More"><Dots /></button>
            </Cluster>
            <Tool><GroupIcon />Group by none<Caret /></Tool>
          </SideTools>
          <Banner>
            <InfoIcon s={20} color="#0f62e6" />
            <a href="#">
              <FirstLine>You are viewing a new version of Browse</FirstLine><br />
              experience. Some features may be missing.<br />
              Click here to access the old experience.
            </a>
          </Banner>
          <GroupTable>
            <thead>
              <tr>
                <th><Check type="checkbox" aria-label="Select all" $w={26} /></th>
                <th><IconLink>Name<UpArrow /></IconLink></th>
              </tr>
            </thead>
            <tbody>
              <GroupRow>
                <td><Check type="checkbox" aria-label="Select MyLowCostVM_group" $w={26} $h={25} /></td>
                <td><IconLink><CubeIcon /><a href="#">MyLowCostVM_group</a></IconLink></td>
              </GroupRow>
              <GroupRow $on>
                <td><Check type="checkbox" defaultChecked aria-label="Select NetworkWatcherRG" $w={26} $h={25} /></td>
                <td><IconLink><CubeIcon /><a href="#">NetworkWatcherRG</a></IconLink></td>
              </GroupRow>
            </tbody>
          </GroupTable>
          <SideFoot>
            <ScrollThumb />
            <Pager>
              <label htmlFor="count">Showing 1 - 2 of 2. Display<br />count:</label>
              <SelectBox>
                <select id="count" defaultValue="10"><option>10</option><option>20</option></select>
                <Caret />
              </SelectBox>
            </Pager>
          </SideFoot>
        </Side>

        <Blade>
          <BladeHead>
            <HeadIcon><PeopleIcon s={36} /></HeadIcon>
            <div>
              <HeadRow>
                <Title>NetworkWatcherRG</Title>
                <PageName>| Access control (IAM)</PageName>
              </HeadRow>
              <Subtitle>Resource group</Subtitle>
            </div>
            <HeadTools>
              <button aria-label="Favorite"><StarIcon /></button>
              <button aria-label="More"><Dots w={14} r={1} /></button>
            </HeadTools>
            <Spacer />
            <HeadRow><button aria-label="Close"><CloseIcon /></button></HeadRow>
          </BladeHead>

          <BladeBody>
            <Menu aria-label="Resource menu">
              <MenuTop>
                <SearchBox $w={234}><SearchIcon /><BareInput placeholder="Search" aria-label="Search menu" /></SearchBox>
                <MenuTools>
                  <button aria-label="Expand all"><UpDownIcon /></button>
                  <button aria-label="Collapse menu"><CollapseIcon s={11} /></button>
                </MenuTools>
              </MenuTop>
              <ul>
                {menu.map(([Icon, label, on]) => (
                  <li key={label}>
                    <MenuItem href="#" $on={on} $group={Icon === RightCaret}>
                      <MenuIconBox><Icon /></MenuIconBox>{label}
                    </MenuItem>
                  </li>
                ))}
              </ul>
              <MenuNote>Add or remove favorites by pressing <kbd>Ctrl+Shift+F</kbd></MenuNote>
            </Menu>

            <Content>
              <Toolbar>
                <Tool><PlusIcon />Add<Caret /></Tool>
                <Tool><DownloadIcon />Download role assignments</Tool>
                <Tool><ColumnsIcon />Edit columns</Tool>
                <Tool><RefreshIcon />Refresh</Tool>
                <Rule />
                <Tool disabled><TrashIcon />Delete</Tool>
                <Rule />
                <Tool><FeedbackIcon />Feedback</Tool>
              </Toolbar>
              <Progress />
              <Inner>
                <Stats>
                  <Quota>
                    <StatHead><strong>Number of role assignments for this subscription</strong><InfoIcon /></StatHead>
                    <QuotaRow><span>3</span><span>4000</span></QuotaRow>
                  </Quota>
                  <div>
                    <StatHead><strong>Privileged</strong><InfoIcon /></StatHead>
                    <BigNumber>1</BigNumber>
                    <a href="#">View assignments</a>
                  </div>
                </Stats>
                <Filters>
                  <SearchBox $w={450} $raised><SearchIcon /><BareInput placeholder="Search by name or email" aria-label="Search by name or email" /></SearchBox>
                  <Pill>Type : <b>All</b></Pill>
                  <Pill>Role : <b>All</b></Pill>
                  <Pill>Scope : <b>All scopes</b></Pill>
                  <Pill>Group by : <b>Role</b></Pill>
                </Filters>
                <Tabs role="tablist">
                  <Tab role="tab" aria-selected="true" $on>All (3)</Tab>
                  <Tab role="tab">Job function roles (2)</Tab>
                  <Tab role="tab">Privileged administrator roles (1)</Tab>
                </Tabs>
                <Roles>
                  <colgroup>
                    <col width="40" /><col width="210" /><col width="209" /><col width="209" /><col width="209" /><col />
                  </colgroup>
                  <thead>
                    <tr>
                      <th><Check type="checkbox" aria-label="Select all assignments" $h={23} /></th>
                      {["Name", "Type", "Role", "Scope", "Condition"].map((h) => (
                        <th key={h}><IconLink>{h}<SortArrows dim={h === "Name"} /></IconLink></th>
                      ))}
                    </tr>
                  </thead>
                  {sections.map((s) => (
                    <tbody key={s.name}>
                      <tr><GroupCell><IconLink><Caret w={21} sw={1.400} />{s.name}</IconLink></GroupCell></tr>
                      {s.rows.map((r) => <RoleRow key={r.name} row={r} />)}
                    </tbody>
                  ))}
                </Roles>
                <Results>Showing 1 - 3 of 3 results.</Results>
              </Inner>
            </Content>
          </BladeBody>
        </Blade>
      </Workspace>
    </Page>
  );
}
